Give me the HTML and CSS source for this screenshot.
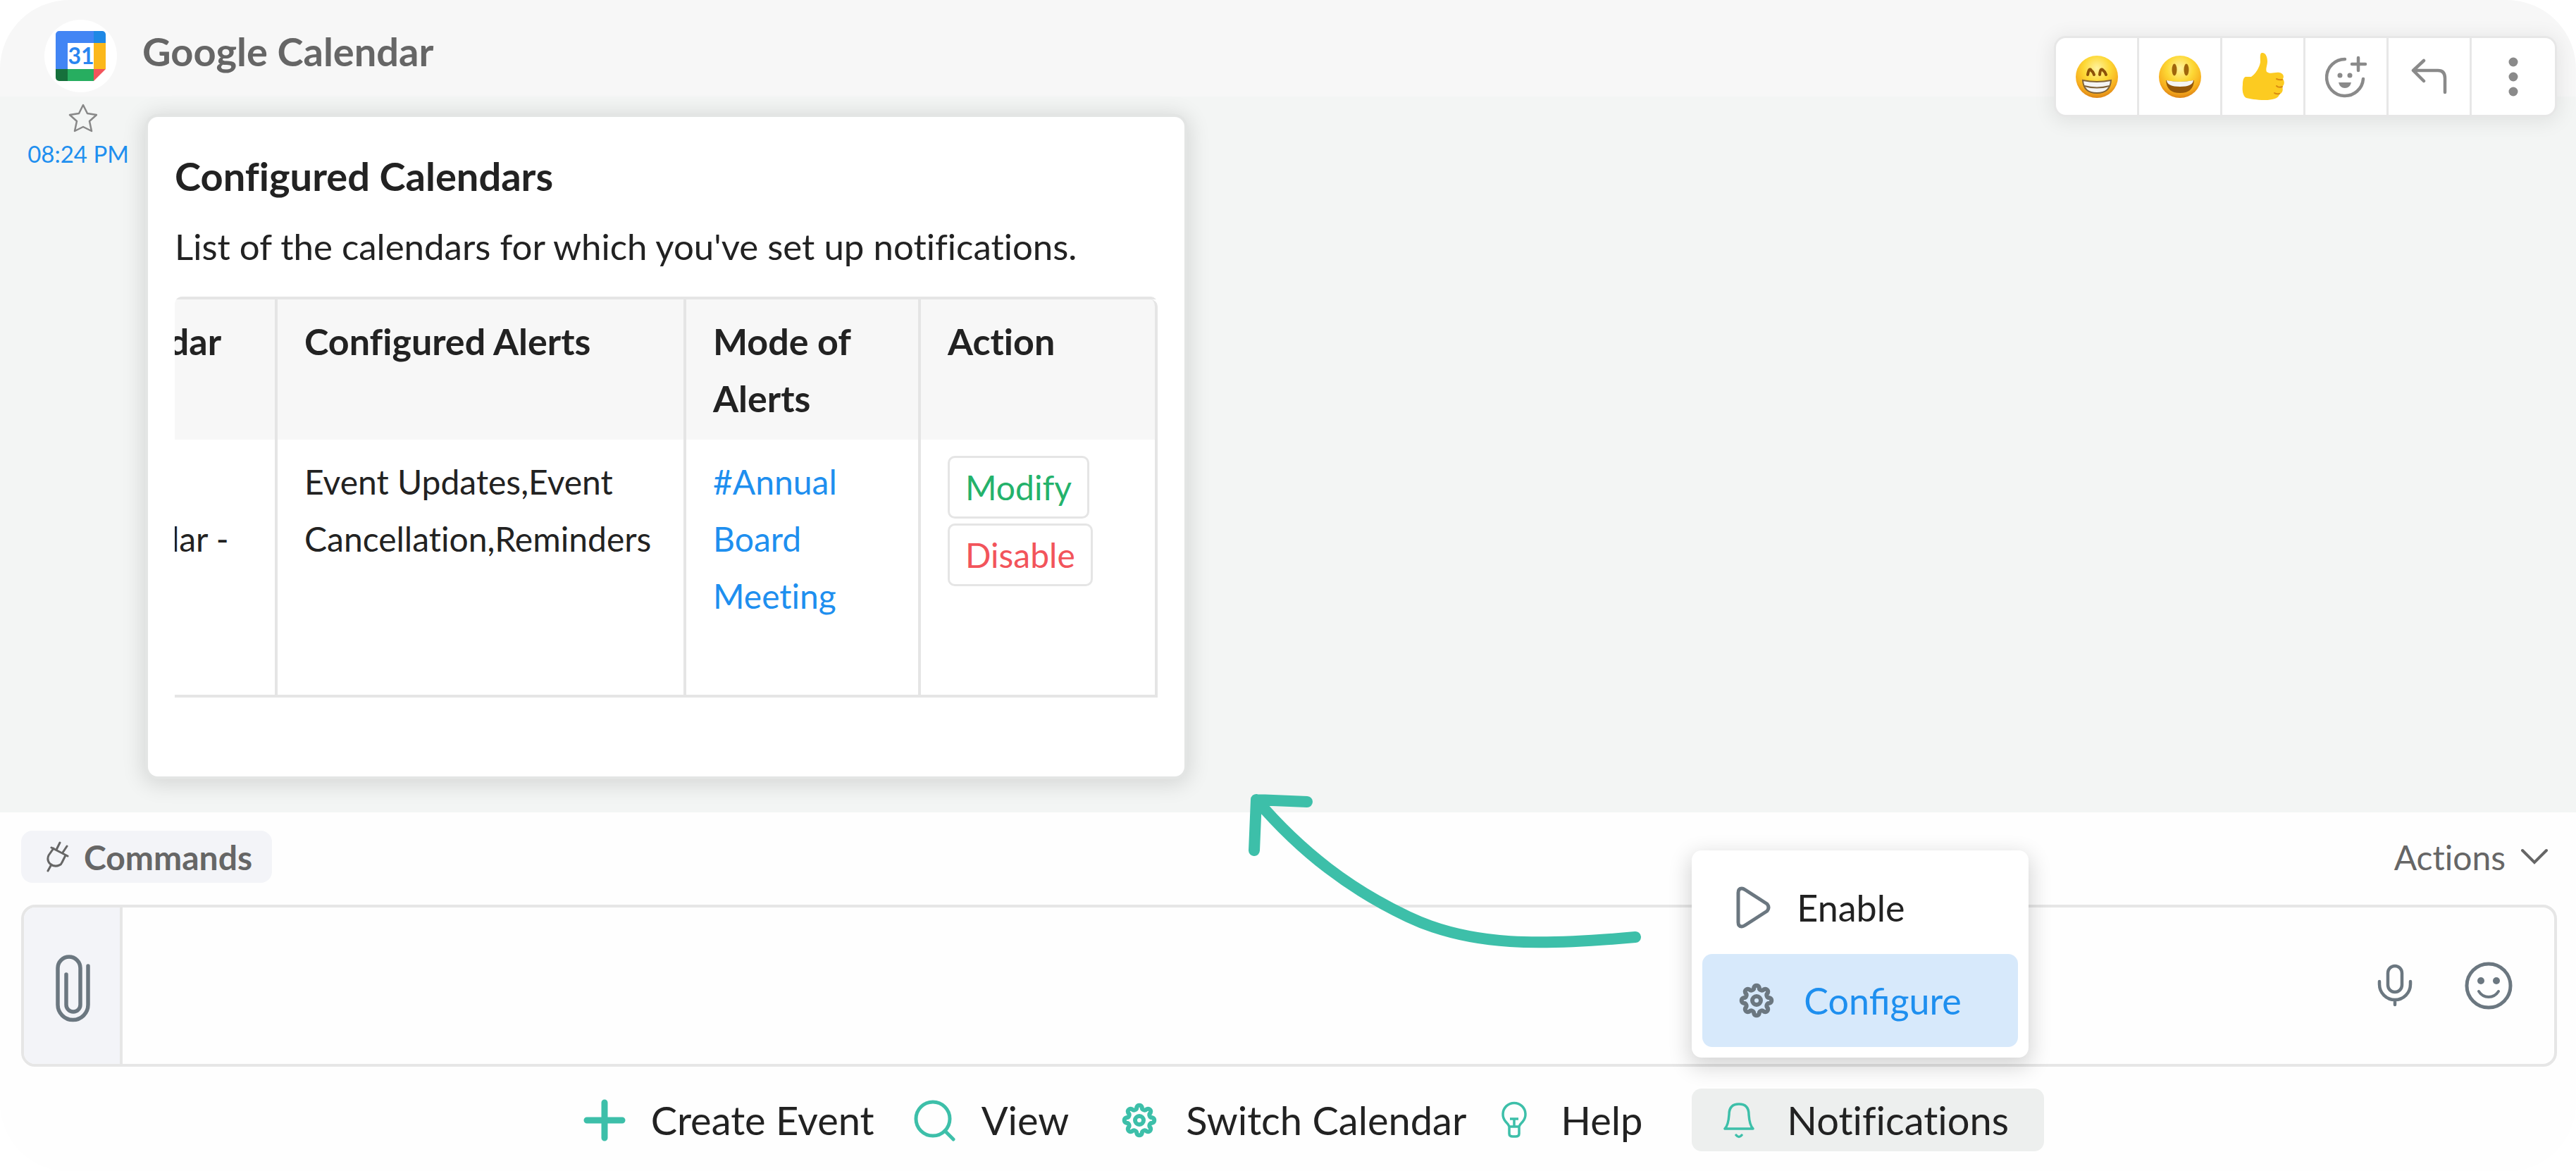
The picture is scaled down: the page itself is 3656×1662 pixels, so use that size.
FILE: index.html
```html
<!DOCTYPE html>
<html lang="en">
<head>
    <meta charset="UTF-8">
    <meta name="viewport" content="width=device-width, initial-scale=1.0">
    <title>Google Calendar</title>
    <link rel="stylesheet" href="styles.css">
</head>
<body>
    <svg width="0" height="0" class="defs" aria-hidden="true">
        <defs>
            <radialGradient id="face" cx="50%" cy="30%" r="70%">
                <stop offset="0" stop-color="#fff3a0"/>
                <stop offset="0.45" stop-color="#fdd835"/>
                <stop offset="0.8" stop-color="#f7ae1e"/>
                <stop offset="1" stop-color="#dd8416"/>
            </radialGradient>
            <symbol id="gear" viewBox="0 0 50 50">
                <path d="M43.6 21.3A3.9 3.9 0 0 1 43.6 28.7A3.9 3.9 0 0 0 40.8 35.6A3.9 3.9 0 0 1 35.6 40.8A3.9 3.9 0 0 0 28.7 43.6A3.9 3.9 0 0 1 21.3 43.6A3.9 3.9 0 0 0 14.4 40.8A3.9 3.9 0 0 1 9.2 35.6A3.9 3.9 0 0 0 6.4 28.7A3.9 3.9 0 0 1 6.4 21.3A3.9 3.9 0 0 0 9.2 14.4A3.9 3.9 0 0 1 14.4 9.2A3.9 3.9 0 0 0 21.3 6.4A3.9 3.9 0 0 1 28.7 6.4A3.9 3.9 0 0 0 35.6 9.2A3.9 3.9 0 0 1 40.8 14.4A3.9 3.9 0 0 0 43.6 21.3Z" fill="none" stroke="currentColor" stroke-width="6"/>
                <circle cx="25" cy="25" r="6" fill="none" stroke="currentColor" stroke-width="6"/>
            </symbol>
        </defs>
    </svg>

    <div class="chat">
        <header class="chat-header">
            <span class="avatar">
                <svg width="71" height="71" viewBox="0 0 71 71">
                    <path d="M5 0H54V17H17V54H0V5A5 5 0 0 1 5 0Z" fill="#4285f4"/>
                    <path d="M54 0H66A5 5 0 0 1 71 5V17H54Z" fill="#1e88e5"/>
                    <path d="M54 17H71V54H54Z" fill="#fbb81b"/>
                    <path d="M17 54H54V71H17Z" fill="#27ae60"/>
                    <path d="M0 54H17V71H5A5 5 0 0 1 0 66Z" fill="#16703c"/>
                    <path d="M54 54H71L54 71Z" fill="#f2545b"/>
                    <path d="M17 17H54V54H17Z" fill="#fff"/>
                    <text x="36" y="47" class="avatar-day">31</text>
                </svg>
            </span>
            <h1>Google Calendar</h1>
        </header>

        <div class="toolbar">
            <button type="button" aria-label="Grinning">
                <svg width="62" height="62" viewBox="0 0 62 62">
                    <circle cx="31" cy="31" r="30" fill="url(#face)"/>
                    <path d="M18 28Q20 17 23 22Q26 24 27 28M35 28Q36 17 40 22Q43 24 44 28" fill="none" stroke="#8d5208" stroke-width="4" stroke-linecap="round"/>
                    <path d="M11 36Q31 40 51 36Q50 54 31 54Q12 54 11 36Z" fill="#f4f4f4" stroke="#80633a" stroke-width="2"/>
                    <path d="M13 44Q31 49 49 44" fill="none" stroke="#80633a" stroke-width="2"/>
                </svg>
            </button>
            <button type="button" aria-label="Smiley">
                <svg width="62" height="62" viewBox="0 0 62 62">
                    <circle cx="31" cy="31" r="30" fill="url(#face)"/>
                    <ellipse cx="23" cy="21" rx="3.5" ry="8.5" fill="#a0660b"/>
                    <ellipse cx="40" cy="21" rx="3.5" ry="8.5" fill="#a0660b"/>
                    <path d="M11 36Q31 40 51 36Q50 54 31 54Q12 54 11 36Z" fill="#95580a"/>
                    <path d="M12 36Q31 40 50 36Q49 45 31 45Q13 45 12 36Z" fill="#f4f4f4"/>
                </svg>
            </button>
            <button type="button" aria-label="Thumbs up">
                <svg width="62" height="70" viewBox="0 0 62 70">
                    <path d="M29 1C34 0 37 6 37 13C37 19 34 24 36 28C42 32 47 28 54 29C60 30 61 35 59 38C62 42 61 47 58 49C60 54 58 58 54 60C53 66 43 68 34 68C20 68 13 66 7 65C2 62 1 54 2 46C2 41 3 36 6 35L14 35C20 31 26 22 27 14C27 8 26 2 29 1Z" fill="#fccb21"/>
                    <path d="M58 39Q54 40 50 38M58 49Q53 51 50 48M54 59Q50 60 47 58" fill="none" stroke="#d88a12" stroke-width="2" stroke-linecap="round"/>
                </svg>
            </button>
            <button type="button" aria-label="Add reaction">
                <svg width="60" height="60" viewBox="0 0 60 60" fill="none" stroke="#8a8a8a" stroke-width="4.5" stroke-linecap="round">
                    <path d="M28 5A26 26 0 1 0 54 33M47 3V21M38 12H57"/>
                    <circle cx="21" cy="28" r="3.5" fill="#8a8a8a" stroke="none"/>
                    <circle cx="35" cy="28" r="3.5" fill="#8a8a8a" stroke="none"/>
                    <path d="M19 38H37Q35 46 28 46Q21 46 19 38Z" fill="#8a8a8a" stroke="none"/>
                </svg>
            </button>
            <button type="button" aria-label="Reply">
                <svg width="52" height="52" viewBox="0 0 52 52" fill="none" stroke="#8a8a8a" stroke-width="4.5" stroke-linecap="round" stroke-linejoin="round">
                    <path d="M18 3L3 17L18 32M3 17H38Q48 17 48 28V48"/>
                </svg>
            </button>
            <button type="button" aria-label="More">
                <svg width="14" height="56" viewBox="0 0 14 56" fill="#8a8a8a">
                    <circle cx="7" cy="7" r="6.5"/>
                    <circle cx="7" cy="28" r="6.5"/>
                    <circle cx="7" cy="49" r="6.5"/>
                </svg>
            </button>
        </div>

        <main class="messages">
            <div class="meta">
                <svg width="54" height="42" viewBox="0 0 54 42">
                    <path d="M34 2L40 14L53 16L43 25L46 39L34 33L22 39L25 25L15 16L28 14Z" fill="none" stroke="#888" stroke-width="2.5" stroke-linejoin="round"/>
                </svg>
                <time>08:24 PM</time>
            </div>
            <section class="card">
                <h2>Configured Calendars</h2>
                <p>List of the calendars for which you've set up notifications.</p>
                <div class="table-scroll">
                    <table>
                        <thead>
                            <tr>
                                <th class="col-calendar">Calendar</th>
                                <th class="col-alerts">Configured Alerts</th>
                                <th class="col-mode">Mode of Alerts</th>
                                <th class="col-action">Action</th>
                            </tr>
                        </thead>
                        <tbody>
                            <tr>
                                <td>Event<br>Calendar -</td>
                                <td>Event Updates,Event Cancellation,Reminders</td>
                                <td><a href="#">#Annual Board Meeting</a></td>
                                <td>
                                    <div class="row-buttons">
                                        <button type="button" class="btn modify">Modify</button>
                                        <button type="button" class="btn disable">Disable</button>
                                    </div>
                                </td>
                            </tr>
                        </tbody>
                    </table>
                </div>
            </section>
        </main>

        <footer class="composer">
            <div class="composer-top">
                <button type="button" class="commands">
                    <svg width="34" height="46" viewBox="0 0 34 46" fill="none" stroke="#666" stroke-width="3" stroke-linecap="round" stroke-linejoin="round">
                        <path d="M8 10L31 22M11 11L4 21Q1 28 6 33Q12 38 19 35Q22 34 23 31L28 21M15 13L20 3M24 17L30 8M8 34L3 43"/>
                    </svg>
                    Commands
                </button>
                <button type="button" class="actions">
                    Actions
                    <svg width="38" height="24" viewBox="0 0 38 24" fill="none" stroke="#666" stroke-width="4" stroke-linecap="round">
                        <path d="M2 3L19 20L36 3"/>
                    </svg>
                </button>
            </div>

            <div class="input-box">
                <button type="button" class="attach" aria-label="Attach">
                    <svg width="50" height="96" viewBox="0 0 50 96" fill="none" stroke="#6b7780" stroke-width="5.5" stroke-linecap="round">
                        <path d="M46 16V71A21.5 21.5 0 0 1 3 71V19A16 16 0 0 1 35 19V71A10 10 0 0 1 15 71V28"/>
                    </svg>
                </button>
                <textarea aria-label="Message"></textarea>
                <button type="button" class="input-icon mic" aria-label="Record">
                    <svg width="50" height="62" viewBox="0 0 50 62" fill="none" stroke="#6b7780" stroke-width="4.5" stroke-linecap="round">
                        <rect x="15" y="3" width="20" height="37" rx="10"/>
                        <path d="M3 25V29A22 22 0 0 0 47 29V25M25 52V58"/>
                    </svg>
                </button>
                <button type="button" class="input-icon smile" aria-label="Emoji">
                    <svg width="68" height="68" viewBox="0 0 68 68" fill="none" stroke="#6b7780" stroke-width="5">
                        <circle cx="34" cy="34" r="31"/>
                        <circle cx="23" cy="27" r="5" fill="#6b7780" stroke="none"/>
                        <circle cx="45" cy="27" r="5" fill="#6b7780" stroke="none"/>
                        <path d="M20 42Q25 50 34 50Q43 50 48 42" stroke-width="4" stroke-linecap="round"/>
                    </svg>
                </button>
            </div>

            <nav class="bot-actions">
                <button type="button" class="bot-action create">
                    <svg width="60" height="60" viewBox="0 0 60 60" stroke="#3dbfa9" stroke-width="9" stroke-linecap="round"><path d="M30 5V55M5 30H55"/></svg>
                    Create Event
                </button>
                <button type="button" class="bot-action view">
                    <svg width="60" height="60" viewBox="0 0 60 60" fill="none" stroke="#3dbfa9" stroke-width="5" stroke-linecap="round"><circle cx="27" cy="28" r="24"/><path d="M44 45L56 57"/></svg>
                    View
                </button>
                <button type="button" class="bot-action switch">
                    <svg width="60" height="60" viewBox="-5 -5 60 60" color="#3dbfa9"><use href="#gear" width="50" height="50"/></svg>
                    Switch Calendar
                </button>
                <button type="button" class="bot-action help">
                    <svg width="60" height="60" viewBox="0 0 60 60" fill="none" stroke="#3dbfa9" stroke-width="3.5">
                        <path d="M23 39Q22 36 18 32A16 16 0 1 1 42 32Q38 36 37 39ZM23 39V49Q23 53 28 53H32Q37 53 37 49V39M30 39V29M24 28H36"/>
                    </svg>
                    Help
                </button>
                <div class="notify">
                    <svg class="arrow" width="566" height="228" viewBox="1770 1118 566 228" fill="none" stroke="#3dbfa9" stroke-width="16" stroke-linecap="round" stroke-linejoin="round">
                        <path d="M1857 1137L1785 1134L1782 1206M1785 1134C1850 1210 1920 1262 2000 1300C2090 1343 2190 1341 2323 1329"/>
                    </svg>
                    <div class="menu">
                        <button type="button" class="menu-item">
                            <svg width="50" height="60" viewBox="0 0 50 60" fill="none" stroke="#6b7780" stroke-width="5" stroke-linejoin="round"><path d="M3 9Q3 3 8 3Q10 3 13 5L44 25Q48 30 44 35L13 55Q10 57 8 57Q3 57 3 51Z"/></svg>
                            Enable
                        </button>
                        <button type="button" class="menu-item selected">
                            <svg width="50" height="50" color="#6b7780"><use href="#gear"/></svg>
                            Configure
                        </button>
                    </div>
                    <button type="button" class="bot-action active">
                        <svg width="44" height="52" viewBox="0 0 44 52" fill="none" stroke="#3dbfa9" stroke-width="3.5" stroke-linecap="round" stroke-linejoin="round">
                            <path d="M2 38H42Q37 33 36 18Q36 3 22 3Q8 3 8 18Q7 33 2 38ZM18 47Q22 52 26 47"/>
                        </svg>
                        Notifications
                    </button>
                </div>
            </nav>
        </footer>
    </div>
</body>
</html>
```
FILE: styles.css
```css
* {
    box-sizing: border-box;
}
body {
    margin: 0;
    background: #fff;
    color: #222;
    font-family: Lato, sans-serif;
    font-size: 48px;
    font-variant-ligatures: none;
}
button {
    border: none;
    background: none;
    padding: 0;
    font: inherit;
    font-variant-ligatures: none;
    color: inherit;
    cursor: pointer;
}
svg {
    display: block;
    flex: none;
}
.defs {
    position: absolute;
}
.chat {
    position: relative;
    display: flex;
    flex-direction: column;
    min-height: 100vh;
    border-radius: 98px;
    overflow: hidden;
    background: #fefefe;
}

/* header */
.chat-header {
    display: flex;
    gap: 36px;
    padding: 28px 63px 6px;
    background: #f7f7f7;
}
.avatar {
    display: flex;
    align-items: center;
    justify-content: center;
    width: 103px;
    height: 103px;
    border-radius: 50%;
    background: #fff;
}
.avatar-day {
    font-size: 32px;
    font-weight: bold;
    fill: #2a86f0;
    text-anchor: middle;
}
h1 {
    margin: 0;
    font-size: 56px;
    line-height: 90px;
    color: #666;
}
.toolbar {
    position: absolute;
    top: 54px;
    right: 30px;
    display: flex;
    height: 109px;
    border-radius: 14px;
    background: #fff;
    box-shadow: 0 0 0 3px #e7e7e7, 0 4px 28px 6px rgba(0, 0, 0, 0.08);
}
.toolbar button {
    display: flex;
    align-items: center;
    justify-content: center;
    width: 118px;
    border-right: 3px solid #e7e7e7;
}
.toolbar button:last-child {
    border-right: none;
}

/* message */
.messages {
    flex: 1;
    display: flex;
    align-items: flex-start;
    padding: 29px 30px 51px 0;
    background: #f3f5f4;
}
.meta {
    display: flex;
    flex-direction: column;
    align-items: center;
    gap: 8px;
    width: 210px;
    margin-top: -19px;
    padding-right: 12px;
    padding-left: 24px;
}
.meta time {
    font-size: 33px;
    line-height: 42px;
    color: #1e8fef;
}
.card {
    width: 1471px;
    padding: 34px 38px 112px;
    border-radius: 14px;
    background: #fff;
    box-shadow: 0 0 0 4px #e3e5e4, 0 4px 30px 8px rgba(0, 0, 0, 0.12);
}
h2 {
    margin: 0;
    font-size: 56px;
    line-height: 100px;
}
.card p {
    margin: 0 0 22px;
    font-size: 51px;
    line-height: 99px;
}
/* scrolled to the last column */
.table-scroll {
    display: flex;
    justify-content: flex-end;
    overflow: hidden;
    border-radius: 10px 10px 0 0;
}
table {
    flex: none;
    width: 1573px;
    table-layout: fixed;
    border-collapse: separate;
    border-spacing: 0;
    border-top: 4px solid #e5e5e5;
    border-bottom: 4px solid #e5e5e5;
    line-height: 81px;
}
th,
td {
    padding: 19px 38px 18px;
    border-right: 4px solid #e5e5e5;
    text-align: left;
    vertical-align: top;
}
th {
    background: #f7f7f7;
    font-size: 52px;
}
th:last-child {
    border-top-right-radius: 10px;
}
td {
    height: 362px;
}
.col-calendar {
    width: 324px;
}
.col-alerts {
    width: 580px;
}
.col-mode {
    width: 333px;
}
a {
    color: #1e8fef;
    text-decoration: none;
}
.row-buttons {
    display: flex;
    flex-direction: column;
    align-items: flex-start;
    gap: 7px;
    padding-top: 4px;
}
.btn {
    height: 89px;
    padding: 0 22px;
    border: 3px solid #e5e5e5;
    border-radius: 10px;
}
.modify {
    color: #24b26b;
}
.disable {
    color: #f2545b;
}

/* composer */
.composer {
    padding: 26px 27px 29px 30px;
}
.composer-top {
    display: flex;
    justify-content: space-between;
    align-items: center;
    margin-bottom: 31px;
    color: #666;
}
.commands {
    display: flex;
    align-items: center;
    gap: 20px;
    height: 74px;
    padding: 0 28px 0 35px;
    border-radius: 16px;
    background: #f3f4f8;
    font-weight: bold;
}
.actions {
    display: flex;
    align-items: center;
    gap: 22px;
    padding-right: 13px;
}
.input-box {
    display: flex;
    align-items: center;
    height: 230px;
    padding-right: 20px;
    border: 4px solid #e6e6e6;
    border-radius: 20px;
    overflow: hidden;
}
.attach {
    display: flex;
    align-items: center;
    justify-content: center;
    width: 140px;
    align-self: stretch;
    padding: 8px 0 0 4px;
    border-right: 4px solid #e6e6e6;
    background: #f3f4f8;
}
.input-box textarea {
    flex: 1;
    align-self: stretch;
    padding: 30px;
    border: none;
    outline: none;
    resize: none;
    background: none;
    font: inherit;
}
.input-icon {
    display: flex;
    align-items: center;
    justify-content: center;
}
.mic {
    width: 120px;
}
.smile {
    width: 146px;
}

/* bot actions */
.bot-actions {
    display: flex;
    align-items: center;
    justify-content: center;
    margin-top: 31px;
    padding-left: 70px;
}
.bot-action {
    display: flex;
    align-items: center;
    gap: 36px;
    height: 89px;
    font-size: 56px;
}
.create {
    margin-right: 56px;
}
.view {
    margin-right: 70px;
}
.switch {
    margin-right: 38px;
}
.help {
    margin-right: 70px;
}
.notify {
    position: relative;
}
.active {
    gap: 46px;
    width: 500px;
    padding-left: 45px;
    border-radius: 14px;
    background: #edefee;
}
.menu {
    position: absolute;
    left: 0;
    bottom: 133px;
    width: 478px;
    padding: 15px;
    border-radius: 14px;
    background: #fff;
    box-shadow: 0 10px 30px 4px rgba(0, 0, 0, 0.16);
}
.menu-item {
    display: flex;
    align-items: center;
    gap: 36px;
    width: 100%;
    height: 132px;
    padding-left: 48px;
    border-radius: 14px;
    font-size: 52px;
}
.selected {
    gap: 42px;
    padding-left: 52px;
    background: #d7e9fb;
    color: #1e8fef;
    font-variant-ligatures: normal;
}
.arrow {
    position: absolute;
    left: -633px;
    bottom: 287px;
}
```
